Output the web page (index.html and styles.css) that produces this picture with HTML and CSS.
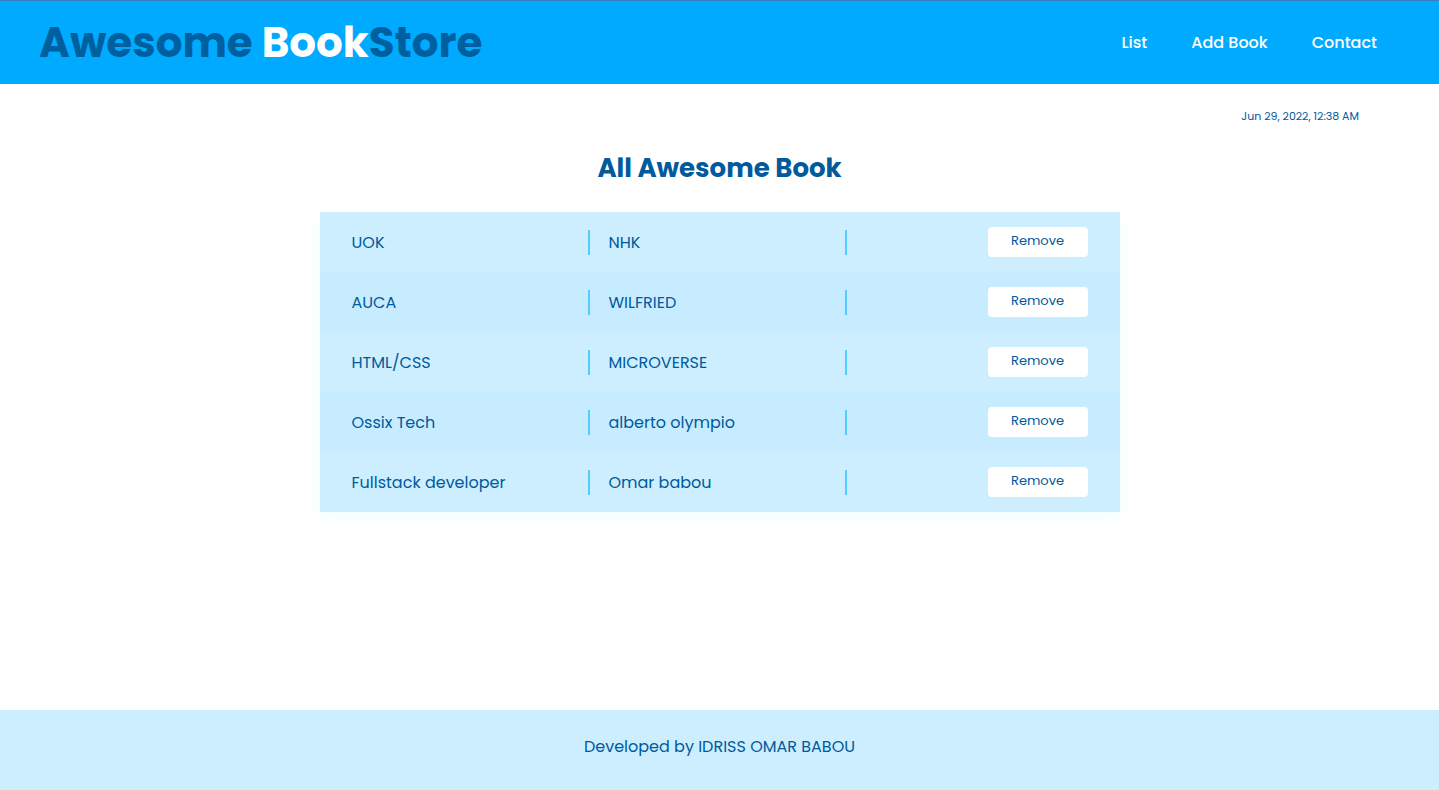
FILE: index.html
```html
<!DOCTYPE html>
<html lang="en">
<head>
  <meta charset="utf-8">
  <meta name="viewport" content="width=device-width, initial-scale=1">
  <title>Awesome BookStore</title>
  <link rel="stylesheet" href="styles.css">
</head>
<body>
  <header class="header">
    <h1 class="logo">Awesome <span class="logo-accent">Book</span>Store</h1>
    <nav class="nav">
      <a class="nav-link" href="#list">List</a>
      <a class="nav-link" href="#add">Add Book</a>
      <a class="nav-link" href="#contact">Contact</a>
    </nav>
  </header>
  <main class="main">
    <p class="date">Jun 29, 2022, 12:38 AM</p>
    <h2 class="title">All Awesome Book</h2>
    <ul class="books" id="list">
      <li class="book"><span class="cell">UOK</span><span class="cell">NHK</span><button class="remove" type="button">Remove</button></li>
      <li class="book"><span class="cell">AUCA</span><span class="cell">WILFRIED</span><button class="remove" type="button">Remove</button></li>
      <li class="book"><span class="cell">HTML/CSS</span><span class="cell">MICROVERSE</span><button class="remove" type="button">Remove</button></li>
      <li class="book"><span class="cell">Ossix Tech</span><span class="cell">alberto olympio</span><button class="remove" type="button">Remove</button></li>
      <li class="book"><span class="cell">Fullstack developer</span><span class="cell">Omar babou</span><button class="remove" type="button">Remove</button></li>
    </ul>
  </main>
  <footer class="footer">Developed by IDRISS OMAR BABOU</footer>
</body>
</html>
```
FILE: styles.css
```css
* {
  box-sizing: border-box;
  margin: 0;
  padding: 0;
}

body {
  display: flex;
  flex-direction: column;
  min-height: 100vh;
  background: #fff;
  color: #005a9c;
  font: 16px/25px Poppins, Inter, sans-serif;
}

.header {
  display: flex;
  align-items: center;
  justify-content: space-between;
  padding: 9px 62px 9px 39px;
  border-top: 1px solid #3a7abd;
  background: #0af;
}

.logo {
  color: #005f9e;
  font-size: 42px;
  font-weight: 700;
  line-height: 65px;
}

.logo-accent {
  color: #fff;
}

.nav {
  display: flex;
  gap: 44px;
}

.nav-link {
  color: #fff;
  font-weight: 500;
  text-decoration: none;
}

.main {
  flex: 1;
  padding: 24px 80px;
}

.date {
  font-size: 11px;
  line-height: 16px;
  text-align: right;
}

.title {
  margin: 24px 0;
  font-size: 26px;
  font-weight: 700;
  line-height: 40px;
  text-align: center;
}

.books {
  max-width: 800px;
  margin: 0 auto;
  list-style: none;
  box-shadow: 0 5px 15px #f0ffff;
}

.book {
  display: flex;
  align-items: center;
  gap: 19px;
  height: 60px;
  padding: 0 32px;
  background: #cef;
}

.book:nth-child(even) {
  background: #c8ecff;
}

.cell {
  flex: 0 0 238px;
  border-right: 2px solid #5cf;
}

.remove {
  width: 100px;
  height: 30px;
  margin-left: auto;
  padding-bottom: 2px;
  border: 0;
  border-radius: 4px;
  background: #fff;
  color: #005a9c;
  font: 13px/20px Poppins, Inter, sans-serif;
}

.footer {
  padding: 24px 16px 31px;
  background: #cef;
  text-align: center;
}
```
